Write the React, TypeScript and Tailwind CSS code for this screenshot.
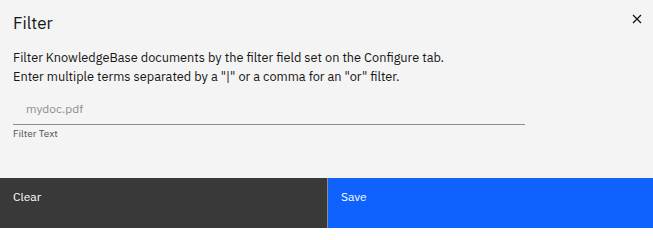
import React from 'react';

const font = { fontFamily: '"IBM Plex Sans", "Noto Sans", "Liberation Sans", sans-serif' };

const CloseIcon: React.FC = () => (
  <svg width="10" height="10" viewBox="0 0 10 10" fill="none" stroke="#161616" strokeWidth="1.3">
    <path d="M1 1L9 9M9 1L1 9" />
  </svg>
);

const App: React.FC = () => {
  return (
    <div className="w-[653px] h-[228px] bg-[#f4f4f4] flex flex-col text-[#161616]" style={font}>
      <div className="flex justify-between items-start pl-[13px] pr-[9px] pt-[12px]">
        <h2 className="text-[17px] leading-[22px] font-normal">Filter</h2>
        <button className="p-[2px]" aria-label="close">
          <CloseIcon />
        </button>
      </div>

      <div className="pl-[13px] pt-[14px] flex-1">
        <p className="text-[12.75px] leading-[19px]">
          Filter KnowledgeBase documents by the filter field set on the Configure tab.
          <br />
          Enter multiple terms separated by a "|" or a comma for an "or" filter.
        </p>

        <div className="mt-[12px] w-[512px]">
          <div className="h-[27px] border-b border-[#8d8d8d] pl-[13px] pb-[7px] flex items-end">
            <span className="text-[12px] leading-[16px] text-[#8d8d8d]">mydoc.pdf</span>
          </div>
          <div className="text-[10px] leading-[14px] mt-[2px] text-[#525252]">Filter Text</div>
        </div>
      </div>

      <div className="h-[50px] flex">
        <button className="w-[327px] bg-[#393939] text-white text-[12px] text-left pl-[13px] pb-[12px] flex items-center">
          Clear
        </button>
        <div className="w-px bg-[#8d8d8d]" />
        <button className="flex-1 bg-[#0f62fe] text-white text-[12px] text-left pl-[13px] pb-[12px] flex items-center">
          Save
        </button>
      </div>
    </div>
  );
};

export default App;
